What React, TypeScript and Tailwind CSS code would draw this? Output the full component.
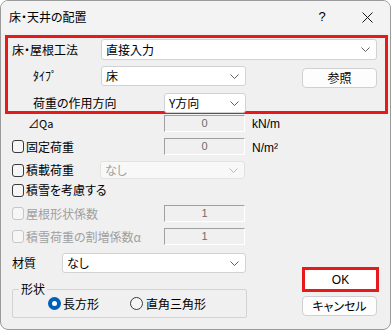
import React from "react";

function Chevron({ disabled }: { disabled?: boolean }) {
  return (
    <svg width="9" height="5" viewBox="0 0 9 5" className="shrink-0">
      <polyline
        points="0.5,0.5 4.5,4.5 8.5,0.5"
        fill="none"
        stroke={disabled ? "#b8b8b8" : "#606060"}
        strokeWidth="1"
      />
    </svg>
  );
}

interface ComboProps {
  value: string;
  size: string;
  disabled?: boolean;
}

function Combo({ value, size, disabled }: ComboProps) {
  return (
    <div
      className={`flex shrink-0 items-center justify-between rounded-[3px] border pl-[4px] pr-[6px] text-[12px] ${size} ${
        disabled ? "border-[#e2e2e2] bg-[#f8f8f8] text-[#a0a0a0]" : "border-[#d2d2d2] bg-white text-black"
      }`}
    >
      <span className="leading-none">{value}</span>
      <Chevron disabled={disabled} />
    </div>
  );
}

function TextBox({ value }: { value: string }) {
  return (
    <div className="flex h-[17px] w-[81px] shrink-0 items-center justify-center border border-t-[#a0a0a0] border-l-[#a0a0a0] border-b-white border-r-white bg-[#f0f0f0] font-['Liberation_Sans',sans-serif] text-[11px] leading-none text-[#6d6d6d]">
      {value}
    </div>
  );
}

function Check({ disabled }: { disabled?: boolean }) {
  return (
    <span
      className={`h-[13px] w-[12px] shrink-0 rounded-[3px] border bg-[#f6f6f6] ${
        disabled ? "border-[#c6c6c6]" : "border-[#3a3a3a]"
      }`}
    />
  );
}

export default function App() {
  return (
    <div className="h-[331px] w-[392px] bg-white font-['Noto_Sans_CJK_JP',sans-serif] text-[12px] text-black [font-feature-settings:'palt']">
      <div className="flex h-[330px] w-[391px] flex-col overflow-hidden rounded-[8px] border border-[#9a9a9a] bg-[#f0f0f0]">
        {/* Title bar */}
        <div className="flex h-[32px] shrink-0 items-center bg-[#f3f3f3]">
          <span className="pl-[8px] text-[12px]">床・天井の配置</span>
          <span className="ml-auto flex w-[46px] justify-center font-['Liberation_Sans',sans-serif] text-[13px]">?</span>
          <span className="flex w-[45px] justify-center">
            <svg width="11" height="11" viewBox="0 0 11 11">
              <path d="M0.5 0.5 L10.5 10.5 M10.5 0.5 L0.5 10.5" stroke="#1a1a1a" strokeWidth="1" />
            </svg>
          </span>
        </div>

        {/* Highlighted block */}
        <div className="ml-[4px] mt-[2px] h-[79px] w-[383px] border-[3px] border-[#e51a1a] pt-[1px]">
          <div className="flex h-[21px] items-center">
            <span className="w-[93px] shrink-0 pl-[4px]">床・屋根工法</span>
            <Combo value="直接入力" size="w-[276px] h-[21px]" />
          </div>
          <div className="mt-[6px] flex items-start">
            <span className="flex h-[20px] w-[93px] shrink-0 items-center pl-[25px]">ﾀｲﾌﾟ</span>
            <Combo value="床" size="w-[145px] h-[20px]" />
            <button className="ml-[56px] mt-[2px] flex h-[20px] w-[75px] items-center justify-center rounded-[4px] border border-[#d0d0d0] bg-[#fdfdfd] text-[12px] leading-none">
              参照
            </button>
          </div>
          <div className="mt-[5px] flex h-[20px] items-center">
            <span className="w-[156px] shrink-0 pl-[25px]">荷重の作用方向</span>
            <Combo value="Y方向" size="w-[82px] h-[20px]" />
          </div>
        </div>

        {/* Lower area */}
        <div className="ml-[11px] flex">
          <div className="flex w-[290px] flex-col">
            <div className="mt-[1px] flex h-[17px] items-center">
              <span className="w-[152px] shrink-0 pl-[16px] text-[11px]">⊿Qa</span>
              <TextBox value="0" />
              <span className="ml-[7px] font-['Liberation_Sans',sans-serif]">kN/m</span>
            </div>
            <div className="mt-[6px] flex h-[17px] items-center">
              <span className="flex w-[152px] shrink-0 items-center">
                <Check />
                <span className="ml-[2px]">固定荷重</span>
              </span>
              <TextBox value="0" />
              <span className="ml-[7px] mt-[3px] font-['Liberation_Sans',sans-serif]">N/m²</span>
            </div>
            <div className="mt-[6px] flex h-[18px] items-center">
              <span className="flex w-[88px] shrink-0 items-center">
                <Check />
                <span className="ml-[2px]">積載荷重</span>
              </span>
              <Combo value="なし" size="w-[145px] h-[18px]" disabled />
            </div>
            <div className="mt-[4px] flex h-[14px] items-center">
              <Check />
              <span className="ml-[2px]">積雪を考慮する</span>
            </div>
            <div className="mt-[8px] flex h-[17px] items-center">
              <span className="flex w-[152px] shrink-0 items-center text-[#a0a0a0]">
                <Check disabled />
                <span className="ml-[2px]">屋根形状係数</span>
              </span>
              <TextBox value="1" />
            </div>
            <div className="mt-[6px] flex h-[17px] items-center">
              <span className="flex w-[152px] shrink-0 items-center text-[#a0a0a0]">
                <Check disabled />
                <span className="ml-[2px]">積雪荷重の割増係数α</span>
              </span>
              <TextBox value="1" />
            </div>
            <div className="mt-[8px] flex h-[20px] items-center">
              <span className="w-[50px] shrink-0">材質</span>
              <Combo value="なし" size="w-[184px] h-[20px]" />
            </div>
            <div className="relative mt-[16px] flex h-[29px] w-[235px] items-center rounded-[2px] border border-[#d3d3d3]">
              <span className="absolute -top-[10px] left-[6px] bg-[#f0f0f0] px-[2px]">形状</span>
              <span className="ml-[35px] flex h-[13px] w-[13px] items-center justify-center rounded-full bg-[#005fb8]">
                <span className="h-[5px] w-[5px] rounded-full bg-white" />
              </span>
              <span className="ml-[2px]">長方形</span>
              <span className="ml-[31px] h-[13px] w-[13px] rounded-full border border-[#3a3a3a] bg-[#f6f6f6]" />
              <span className="ml-[3px]">直角三角形</span>
            </div>
          </div>

          <div className="mt-[153px] flex flex-col">
            <div className="h-[25px] w-[77px] border-[3px] border-[#e51a1a] bg-white">
              <div className="flex h-full items-center justify-center font-['Liberation_Sans',sans-serif] text-[12px]">
                OK
              </div>
            </div>
            <button className="mt-[4px] flex h-[20px] w-[75px] items-center justify-center rounded-[4px] border border-[#d0d0d0] bg-[#fdfdfd] text-[12px] leading-none">
              キャンセル
            </button>
          </div>
        </div>
      </div>
    </div>
  );
}
